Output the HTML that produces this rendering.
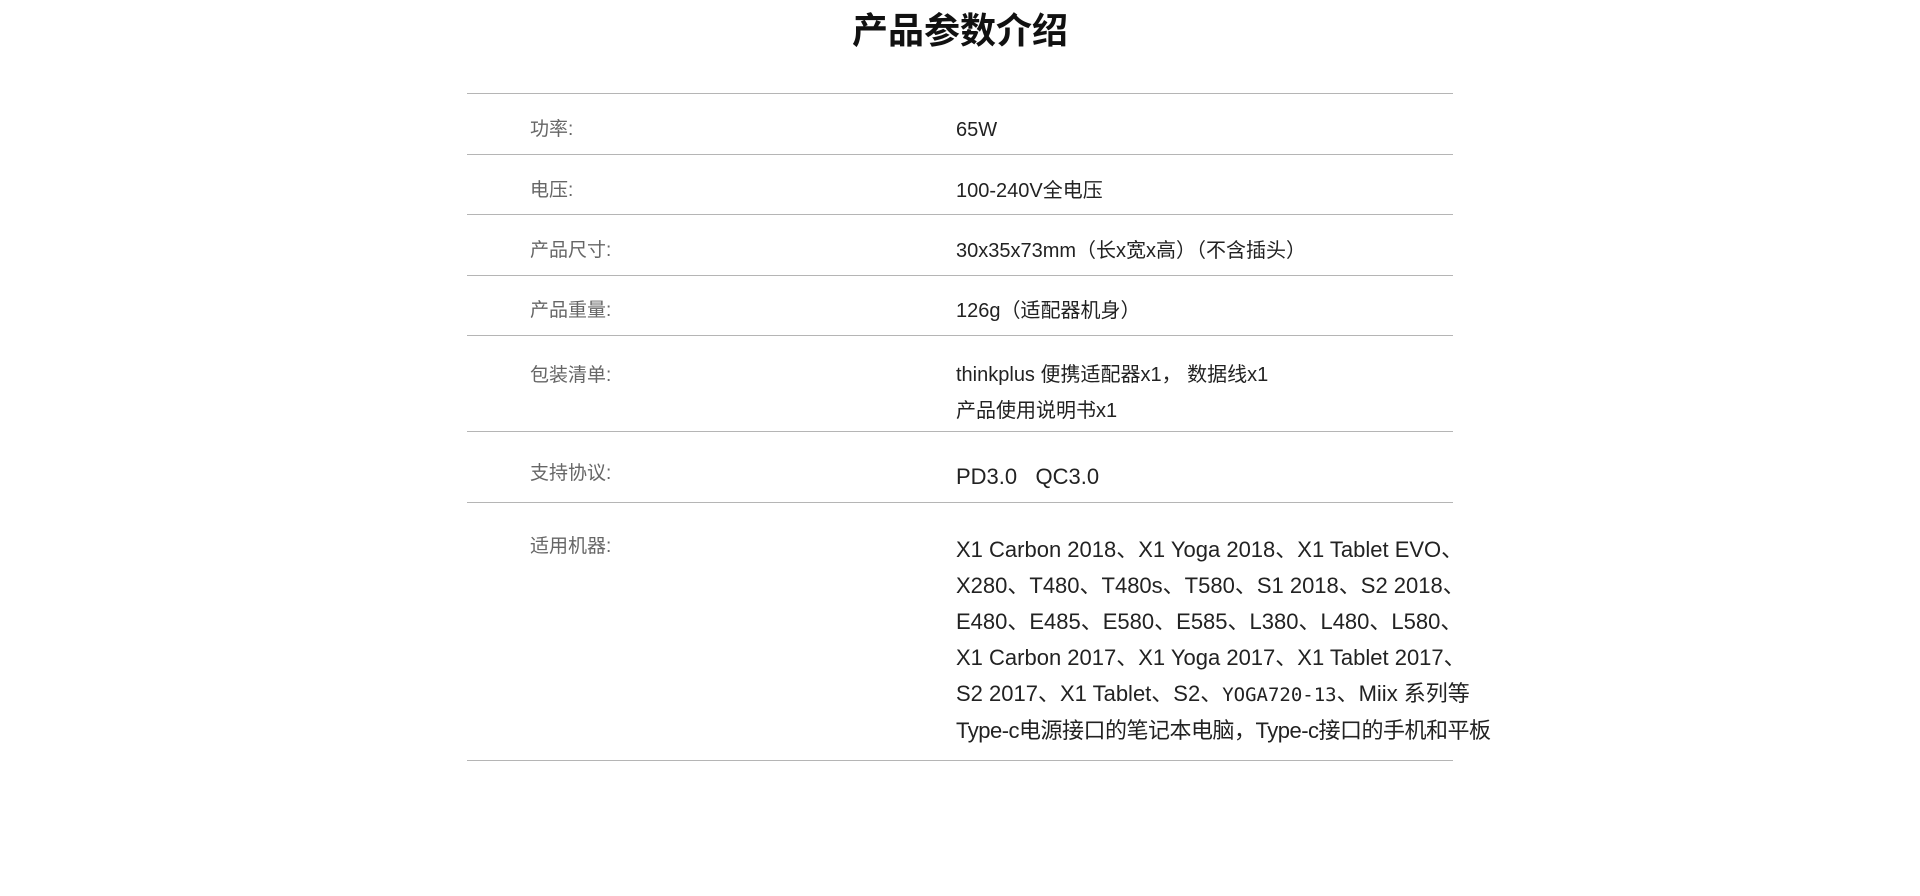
<!DOCTYPE html>
<html><head><meta charset="utf-8"><style>
body{margin:0;width:1920px;height:896px;background:#fff;position:relative;overflow:hidden;font-family:"Liberation Sans","Noto Sans CJK SC",sans-serif}
.t{position:absolute;left:0;width:1920px;text-align:center;top:2px;font-size:36px;font-weight:bold;color:#111}
.l{position:absolute;left:467px;width:986px;height:1px;background:#b5b5b5}
.k{position:absolute;left:530px;font-size:19px;color:#666;line-height:24px}
.v{position:absolute;left:956px;font-size:20px;color:#222;line-height:24px;white-space:nowrap}
.m{font-size:22px;line-height:36px}
</style></head><body>
<div class="t">产品参数介绍</div>
<div class="l" style="top:93px"></div>
<div class="l" style="top:154px"></div>
<div class="l" style="top:214px"></div>
<div class="l" style="top:275px"></div>
<div class="l" style="top:335px"></div>
<div class="l" style="top:431px"></div>
<div class="l" style="top:502px"></div>
<div class="l" style="top:760px"></div>
<div class="k" style="top:118px">功率:</div><div class="v" style="top:118px">65W</div>
<div class="k" style="top:179px">电压:</div><div class="v" style="top:179px">100-240V全电压</div>
<div class="k" style="top:239px">产品尺寸:</div><div class="v" style="top:239px">30x35x73mm（长x宽x高）（不含插头）</div>
<div class="k" style="top:299px">产品重量:</div><div class="v" style="top:299px">126g（适配器机身）</div>
<div class="k" style="top:364px">包装清单:</div><div class="v" style="top:357px;line-height:36px">thinkplus 便携适配器x1， 数据线x1<br>产品使用说明书x1</div>
<div class="k" style="top:462px">支持协议:</div><div class="v" style="top:465px;font-size:22px">PD3.0&nbsp;&nbsp; QC3.0</div>
<div class="k" style="top:535px">适用机器:</div>
<div class="v m" style="top:532px">X1 Carbon 2018、X1 Yoga 2018、X1 Tablet EVO、<br>X280、T480、T480s、T580、S1 2018、S2 2018、<br>E480、E485、E580、E585、L380、L480、L580、<br>X1 Carbon 2017、X1 Yoga 2017、X1 Tablet 2017、<br>S2 2017、X1 Tablet、S2、<span style="font-family:'DejaVu Sans Mono',monospace;font-size:19px">YOGA720-13</span>、Miix 系列等<br><span style="letter-spacing:-0.5px">Type-c电源接口的笔记本电脑，Type-c接口的手机和平板</span></div>
</body></html>
